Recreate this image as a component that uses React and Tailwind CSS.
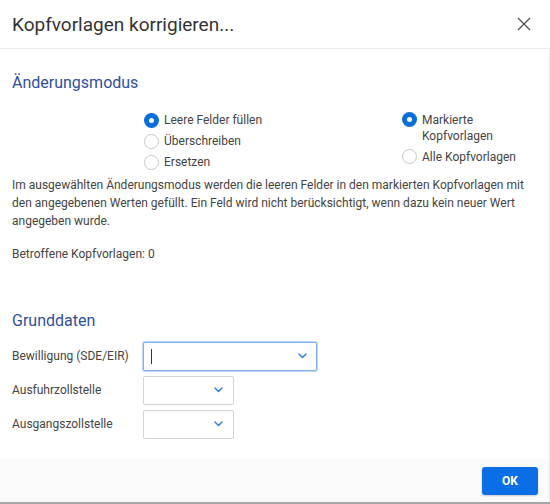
import { useState } from "react";

const modes = ["Leere Felder füllen", "Überschreiben", "Ersetzen"];
const scopes = ["Markierte Kopfvorlagen", "Alle Kopfvorlagen"];

function Radio({ checked, label, onClick, className = "" }) {
  return (
    <button type="button" onClick={onClick} className={`flex items-start text-left ${className}`}>
      <span
        className={
          checked
            ? "mt-[0.5px] flex h-[15px] w-[15px] shrink-0 items-center justify-center rounded-full bg-[#0a6ed8]"
            : "mt-[0.5px] h-[15px] w-[15px] shrink-0 rounded-full border border-[#c8c8c8] bg-white"
        }
      >
        {checked && <span className="h-[5px] w-[5px] rounded-full bg-white" />}
      </span>
      <span className="ml-[5px]">{label}</span>
    </button>
  );
}

function Chevron() {
  return (
    <svg width="9" height="6" viewBox="0 0 9 6" fill="none" className="shrink-0">
      <path d="M1 1l3.5 3.5L8 1" stroke="#3d7fe0" strokeWidth="1.5" strokeLinecap="round" strokeLinejoin="round" />
    </svg>
  );
}

function SelectBox({ width, focused }) {
  return (
    <div
      className={
        focused
          ? `flex h-[29px] items-center justify-between rounded-[2px] border border-[#7fb0f0] bg-white pl-[7px] pr-[9px] shadow-[0_0_0_1px_#bcd6f7] ${width}`
          : `flex h-[29px] items-center justify-end rounded-[2px] border border-[#d4d4d4] bg-white pr-[10px] ${width}`
      }
    >
      {focused && <span className="h-[15px] w-px bg-[#333]" />}
      <Chevron />
    </div>
  );
}

export default function App() {
  const [mode, setMode] = useState(0);
  const [scope, setScope] = useState(0);

  return (
    <div
      className="flex h-[504px] w-[550px] flex-col overflow-hidden border-b-2 border-[#a5a5a5] bg-white text-[12px] text-[#444]"
      style={{ fontFamily: "Roboto, 'Noto Sans', sans-serif" }}
    >
      <div className="flex h-[49px] shrink-0 items-center justify-between border-b border-[#ececec] pl-[12px] pr-[19px]">
        <h1 className="text-[19px] leading-none text-[#333]">Kopfvorlagen korrigieren...</h1>
        <svg width="14" height="14" viewBox="0 0 14 14" className="mt-[-1px]">
          <path d="M1 1l12 12M13 1L1 13" stroke="#555" strokeWidth="1.3" />
        </svg>
      </div>

      <div className="flex-1 border-r border-[#e6e6e6] px-[12px]">
        <h2 className="mt-[22px] text-[16px] leading-[24px] text-[#2f4f9c]">Änderungsmodus</h2>

        <div className="mt-[14px] flex items-start pl-[132px]">
          <div className="flex w-[258px] flex-col">
            {modes.map((m, i) => (
              <Radio
                key={m}
                label={m}
                checked={mode === i}
                onClick={() => setMode(i)}
                className="h-[21px] pt-[3px] leading-[16px]"
              />
            ))}
          </div>
          <div className="mt-[2.5px] flex flex-col">
            <Radio
              label={scopes[0]}
              checked={scope === 0}
              onClick={() => setScope(0)}
              className="w-[120px] leading-[16px]"
            />
            <Radio
              label={scopes[1]}
              checked={scope === 1}
              onClick={() => setScope(1)}
              className="mt-[5px] leading-[16px]"
            />
          </div>
        </div>

        <p className="mt-[3.5px] leading-[18px]">
          Im ausgewählten Änderungsmodus werden die leeren Felder in den markierten Kopfvorlagen mit den
          angegebenen Werten gefüllt. Ein Feld wird nicht berücksichtigt, wenn dazu kein neuer Wert angegeben
          wurde.
        </p>
        <p className="mt-[15px] leading-[18px]">Betroffene Kopfvorlagen: 0</p>

        <h2 className="mt-[46px] text-[16px] leading-[24px] text-[#2f4f9c]">Grunddaten</h2>

        <div className="mt-[9px] flex flex-col gap-[5px]">
          <div className="flex items-center">
            <span className="w-[131px]">Bewilligung (SDE/EIR)</span>
            <SelectBox width="w-[174px]" focused />
          </div>
          <div className="flex items-center">
            <span className="w-[131px]">Ausfuhrzollstelle</span>
            <SelectBox width="w-[91px]" />
          </div>
          <div className="flex items-center">
            <span className="w-[131px]">Ausgangszollstelle</span>
            <SelectBox width="w-[91px]" />
          </div>
        </div>
      </div>

      <div className="flex h-[43px] shrink-0 items-center justify-end border-r border-[#e6e6e6] bg-[#fafafa] pr-[11px]">
        <button
          type="button"
          className="h-[28px] w-[56px] rounded-[3px] bg-[#0a6ee6] text-[12px] font-bold text-white shadow-[0_1px_2px_rgba(0,0,0,0.2)]"
        >
          OK
        </button>
      </div>
    </div>
  );
}
